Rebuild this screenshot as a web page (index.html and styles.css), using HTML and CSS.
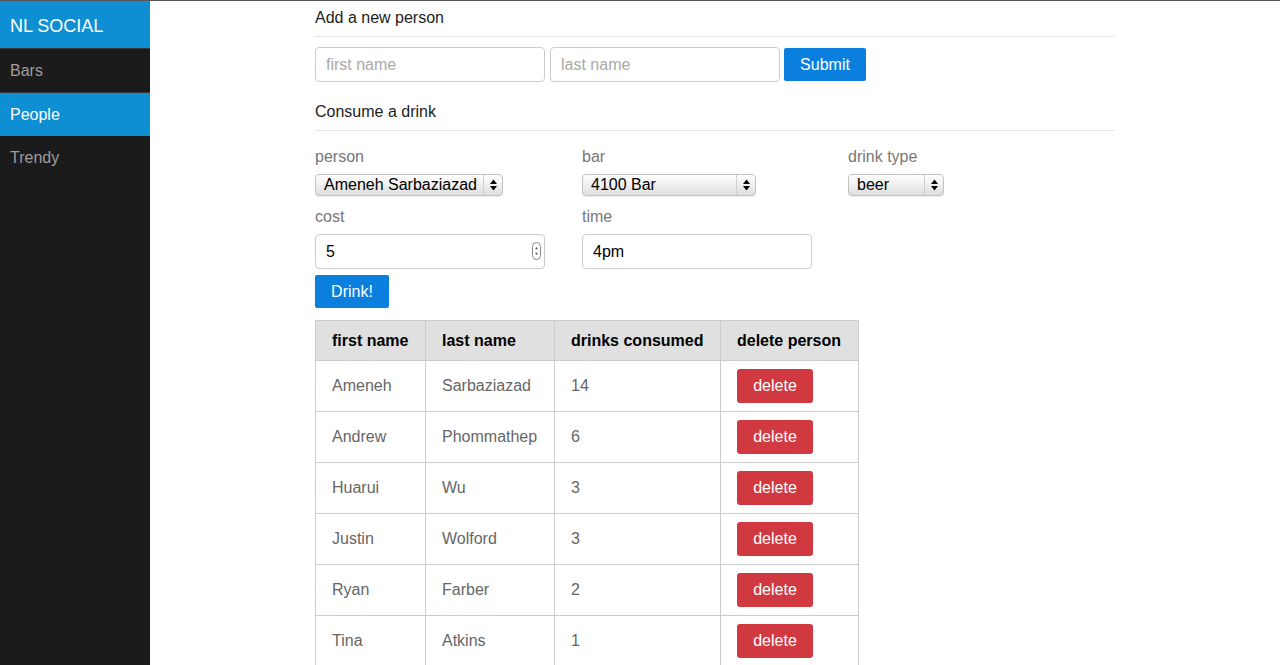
FILE: index.html
```html
<!DOCTYPE html>
<html>
<head>
<meta charset="utf-8">
<title>NL Social</title>
<link rel="stylesheet" href="styles.css">
</head>
<body>
<div class="layout">
  <nav class="sidebar">
    <div class="brand">NL SOCIAL</div>
    <a class="nav-item sep">Bars</a>
    <a class="nav-item active">People</a>
    <a class="nav-item">Trendy</a>
  </nav>
  <main class="main">
    <div class="container">
      <h2 class="section-title">Add a new person</h2>
      <div class="add-row">
        <input class="text-input" type="text" placeholder="first name">
        <input class="text-input" type="text" placeholder="last name">
        <button class="btn btn-primary btn-submit">Submit</button>
      </div>

      <h2 class="section-title second">Consume a drink</h2>
      <div class="drink-grid">
        <div class="field">
          <label class="label">person</label>
          <div class="select sel-person"><span class="sel-text">Ameneh Sarbaziazad</span><span class="sel-arrow"><svg width="7" height="12" viewBox="0 0 7 12"><path d="M3.5 0.5 L7 5 L0 5 Z M3.5 11.5 L7 7 L0 7 Z" fill="#000"/></svg></span></div>
        </div>
        <div class="field">
          <label class="label">bar</label>
          <div class="select sel-bar"><span class="sel-text">4100 Bar</span><span class="sel-arrow"><svg width="7" height="12" viewBox="0 0 7 12"><path d="M3.5 0.5 L7 5 L0 5 Z M3.5 11.5 L7 7 L0 7 Z" fill="#000"/></svg></span></div>
        </div>
        <div class="field">
          <label class="label">drink type</label>
          <div class="select sel-drink"><span class="sel-text">beer</span><span class="sel-arrow"><svg width="7" height="12" viewBox="0 0 7 12"><path d="M3.5 0.5 L7 5 L0 5 Z M3.5 11.5 L7 7 L0 7 Z" fill="#000"/></svg></span></div>
        </div>
        <div class="field row2">
          <label class="label">cost</label>
          <div class="num-wrap">
            <input class="text-input val-input" type="text" value="5">
            <span class="spinner"><svg width="9" height="18" viewBox="0 0 9 18"><rect x="0.5" y="0.5" width="8" height="17" rx="4" fill="#fff" stroke="#8a8a8a"/><path d="M4.5 5 L6 7.2 L3 7.2 Z M4.5 13 L6 10.8 L3 10.8 Z" fill="#555"/></svg></span>
          </div>
        </div>
        <div class="field row2">
          <label class="label">time</label>
          <input class="text-input val-input" type="text" value="4pm">
        </div>
      </div>
      <button class="btn btn-primary btn-drink">Drink!</button>

      <table class="people">
        <thead>
          <tr><th class="c1">first name</th><th class="c2">last name</th><th class="c3">drinks consumed</th><th class="c4">delete person</th></tr>
        </thead>
        <tbody>
          <tr><td>Ameneh</td><td>Sarbaziazad</td><td>14</td><td><button class="btn btn-danger">delete</button></td></tr>
          <tr><td>Andrew</td><td>Phommathep</td><td>6</td><td><button class="btn btn-danger">delete</button></td></tr>
          <tr><td>Huarui</td><td>Wu</td><td>3</td><td><button class="btn btn-danger">delete</button></td></tr>
          <tr><td>Justin</td><td>Wolford</td><td>3</td><td><button class="btn btn-danger">delete</button></td></tr>
          <tr><td>Ryan</td><td>Farber</td><td>2</td><td><button class="btn btn-danger">delete</button></td></tr>
          <tr><td>Tina</td><td>Atkins</td><td>1</td><td><button class="btn btn-danger">delete</button></td></tr>
        </tbody>
      </table>
    </div>
  </main>
</div>
</body>
</html>
```

FILE: styles.css
```css
* { box-sizing: border-box; }
html, body { margin: 0; padding: 0; }
body {
  font-family: "Liberation Sans", Arial, Helvetica, sans-serif;
  font-size: 16px;
  color: #333;
  background: #fff;
  border-top: 1px solid #555;
  overflow: hidden;
}
.layout { display: flex; min-height: 664px; }
.sidebar {
  width: 150px;
  flex: 0 0 150px;
  background: #1b1b1b;
  min-height: 664px;
}
.brand {
  height: 48px;
  background: #0e8fd3;
  color: #fff;
  font-size: 18px;
  padding-left: 10px;
  padding-top: 3px;
  display: flex;
  align-items: center;
  border-bottom: 1px solid #3a3a3a;
}
.nav-item {
  display: flex;
  align-items: center;
  height: 44px;
  padding-left: 10px;
  color: #9d9d9d;
  font-size: 16px;
}
.nav-item.sep { border-bottom: 1px solid #3a3a3a; }
.nav-item.active { background: #0e8fd3; color: #fff; height: 43px; }

.main { flex: 1; }
.container { width: 800px; margin: 0 auto; }
.section-title {
  margin: 0;
  font-size: 16px;
  font-weight: normal;
  line-height: 20px;
  color: #222;
  padding: 7px 0 8px;
  border-bottom: 1px solid #e5e5e5;
}
.section-title.second { margin-top: 13px; }

.add-row { display: flex; gap: 5px; margin-top: 10px; align-items: center; }
.text-input {
  width: 230px;
  height: 35px;
  border: 1px solid #ccc;
  border-radius: 4px;
  padding: 0 10px;
  font-family: inherit;
  font-size: 16px;
  color: #000;
  background: #fff;
  outline: none;
  margin: 0;
}
.text-input::placeholder { color: #a9a9a9; }
.btn {
  font-family: inherit;
  font-size: 16px;
  border: none;
  border-radius: 2px;
  color: #fff;
  cursor: pointer;
  margin: 0;
}
.btn-primary { background: #0a7fde; height: 33px; }
.btn-submit { width: 82px; margin-left: -1px; }
.btn-drink { width: 74px; margin-top: 6px; display: block; }

.drink-grid {
  display: grid;
  grid-template-columns: 267px 266px 267px;
  margin-top: 16px;
  row-gap: 11px;
}
.label { display: block; line-height: 20px; color: #777; margin-bottom: 7px; }
.select {
  display: flex;
  align-items: stretch;
  height: 22px;
  border: 1px solid #c3c3c3;
  border-radius: 4px;
  background: linear-gradient(#fdfdfd, #f1f1f1 45%, #dedede);
  box-shadow: 0 1px 1px rgba(0,0,0,0.08);
  color: #000;
  font-size: 16px;
}
.sel-text { flex: 1; padding-left: 8px; line-height: 20px; white-space: nowrap; overflow: hidden; }
.sel-arrow {
  width: 19px;
  border-left: 1px solid #d0d0d0;
  display: flex;
  align-items: center;
  justify-content: center;
}
.sel-person { width: 188px; }
.sel-bar { width: 174px; }
.sel-drink { width: 96px; }

.num-wrap { position: relative; width: 230px; }
.val-input { width: 230px; }
.spinner { position: absolute; right: 4px; top: 8px; height: 18px; }
.spinner svg { display: block; }

.people {
  margin-top: 12px;
  border-collapse: collapse;
  border: 1px solid #ccc;
}
.people th, .people td {
  border: 1px solid #ccc;
  padding: 0 16px;
  text-align: left;
  font-size: 16px;
}
.people th {
  background: #e0e0e0;
  color: #000;
  font-weight: bold;
  height: 40px;
}
.people td { height: 51px; color: #666; }
.c1 { width: 110px; }
.c2 { width: 129px; }
.c3 { width: 166px; }
.c4 { width: 138px; }
.btn-danger {
  background: #d0393f;
  width: 76px;
  height: 34px;
  border-radius: 3px;
  display: block;
}
```
